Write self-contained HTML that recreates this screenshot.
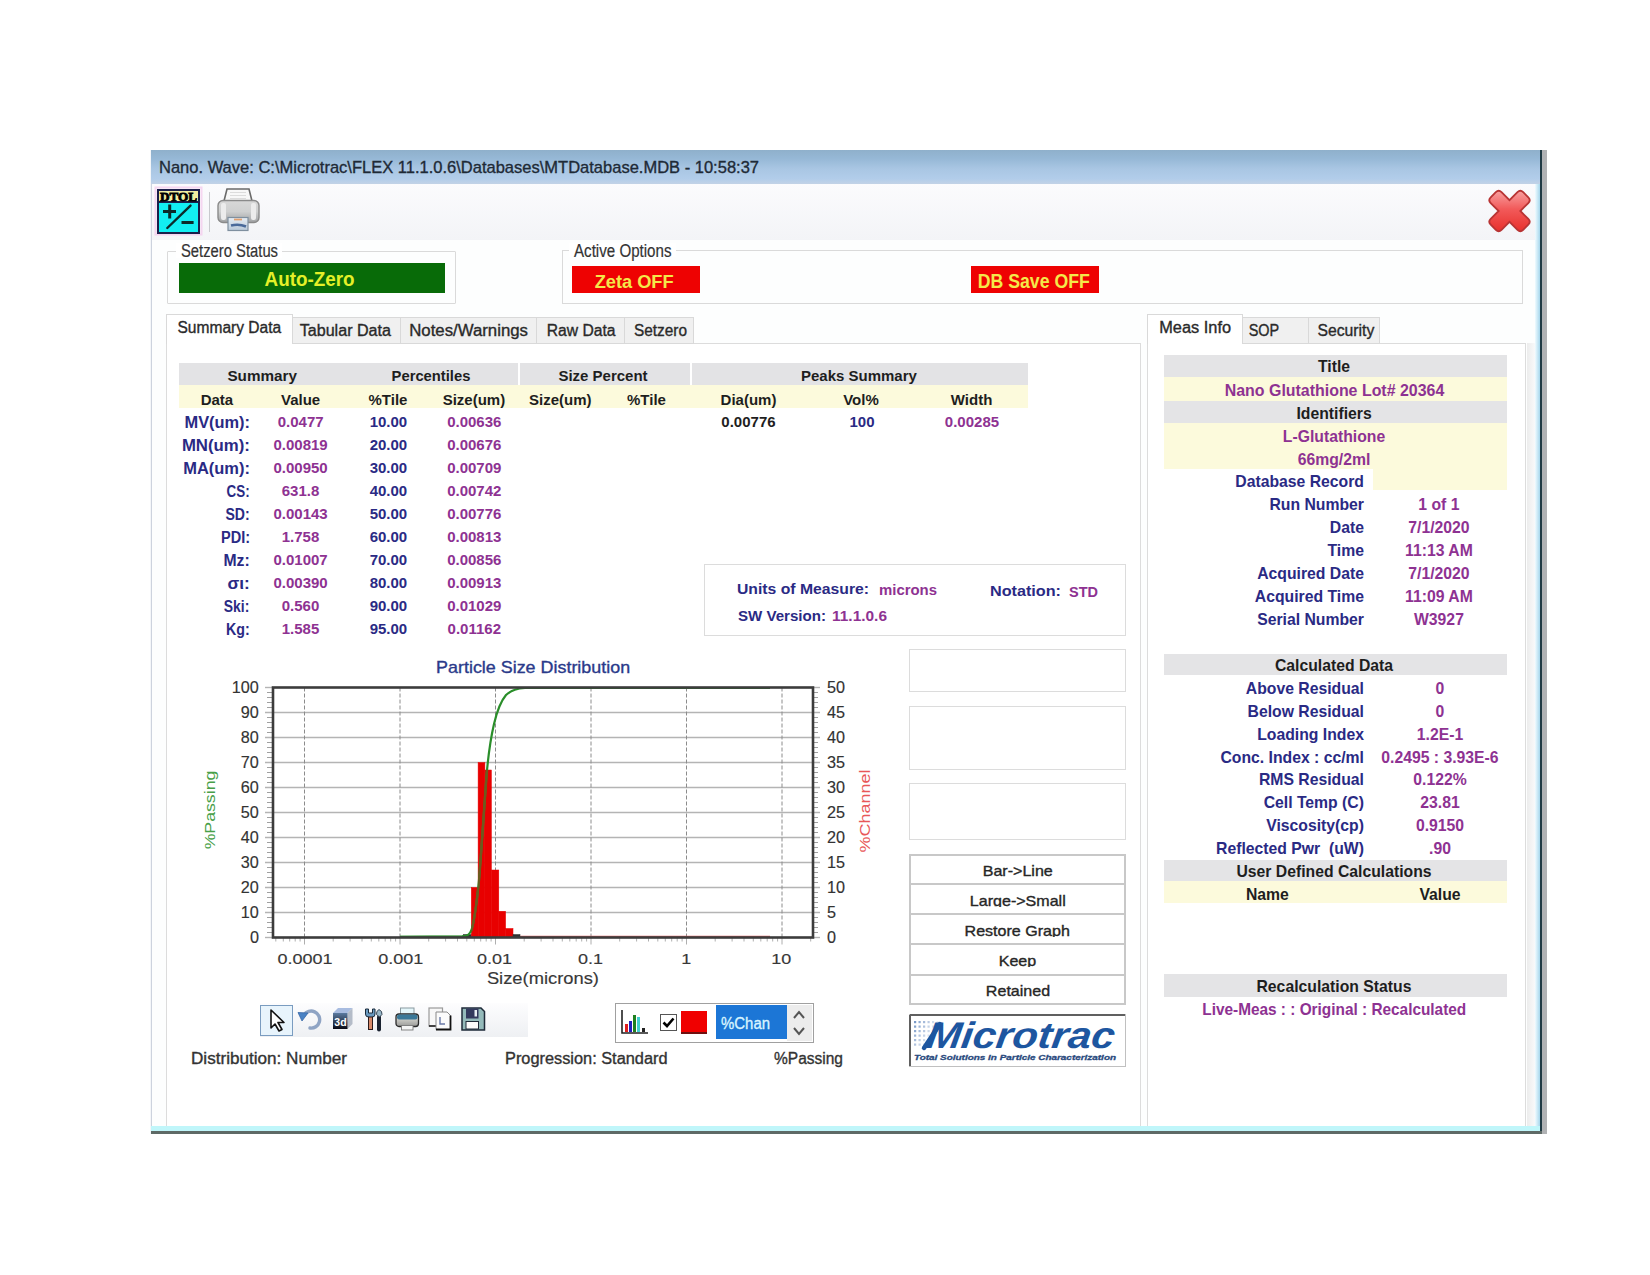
<!DOCTYPE html>
<html><head><meta charset="utf-8">
<style>
*{margin:0;padding:0;box-sizing:border-box}
html,body{width:1650px;height:1275px;background:#fff;overflow:hidden;position:relative;font-family:"Liberation Sans",sans-serif}
.a{position:absolute}
.t{position:absolute;white-space:nowrap}
svg{position:absolute;overflow:visible}
</style></head><body>
<div class="a" style="left:150px;top:150px;width:1390px;height:984px;background:#fdfefe;border-left:1px solid #f4f6f9"></div>
<div class="a" style="left:151px;top:184px;width:1px;height:947px;background:#cdd3de"></div>
<div class="a" style="left:151px;top:150px;width:1389px;height:34px;background:linear-gradient(#8fb0cb 0%,#96b8d6 25%,#a9c6e3 55%,#b2cdea 85%,#c2d2e6 100%)"></div>
<div class="t" style="left:159.0px;top:157.0px;width:621.9px;text-align:left;font-size:17px;line-height:22px;color:#1e2a36;-webkit-text-stroke:0.35px;transform:scaleX(0.9710);transform-origin:0 50%;">Nano. Wave: C:\Microtrac\FLEX 11.1.0.6\Databases\MTDatabase.MDB - 10:58:37</div>
<div class="a" style="left:152px;top:184px;width:1386px;height:56px;background:linear-gradient(#fbfbfd,#f3f4f7)"></div>
<div class="a" style="left:1527px;top:343px;width:9px;height:783px;background:linear-gradient(90deg,#ececec,#fafbfc)"></div>
<div class="a" style="left:1535px;top:184px;width:5px;height:947px;background:linear-gradient(90deg,#f0fbff,#a6d6ec)"></div>
<div class="a" style="left:1540px;top:150px;width:2px;height:984px;background:#1f3a44"></div>
<div class="a" style="left:1542px;top:150px;width:5px;height:984px;background:#b0b2b4"></div>
<div class="a" style="left:151px;top:1126px;width:1389px;height:5px;background:#c0f6fa"></div>
<div class="a" style="left:151px;top:1131px;width:1391px;height:3px;background:#5e6a66"></div>
<svg style="left:155px;top:187px" width="47" height="48" viewBox="-2 -2 47 48">
<rect x="-1.5" y="-1.5" width="46" height="47" fill="none" stroke="#f4c8ec" stroke-width="2" opacity="0.7"/>
<rect x="1" y="1" width="41" height="43" fill="#12eef2" stroke="#1a1f4a" stroke-width="2"/>
<rect x="1" y="1" width="41" height="12" fill="#f2eea0" stroke="#1a1f4a" stroke-width="2"/>
<text x="21.5" y="11.6" text-anchor="middle" font-family="Liberation Serif" font-weight="bold" font-size="13.5" fill="#000" textLength="37" lengthAdjust="spacingAndGlyphs" stroke="#000" stroke-width="0.9">DTOL</text>
<path d="M6 22.5 H19 M12.7 15.4 V29.5" stroke="#0c2a2a" stroke-width="3"/>
<path d="M10.3 39 L33.5 16.6" stroke="#0c2a2a" stroke-width="2.4" stroke-linecap="round"/>
<path d="M24.5 33.5 H36.6" stroke="#0c2a2a" stroke-width="3"/>
</svg>
<div class="a" style="left:209px;top:192px;width:1px;height:40px;background:#c8cace"></div>
<svg style="left:217px;top:188px" width="44" height="44" viewBox="0 0 44 44">
<defs><linearGradient id="pg" x1="0" y1="0" x2="0" y2="1"><stop offset="0" stop-color="#d8d8d8"/><stop offset="0.5" stop-color="#cfd0d0"/><stop offset="1" stop-color="#a0a2a4"/></linearGradient>
<linearGradient id="tg" x1="0" y1="0" x2="0" y2="1"><stop offset="0" stop-color="#e8eef4"/><stop offset="1" stop-color="#b8c8d8"/></linearGradient></defs>
<path d="M7 13 L10 1 H32 L35 13 Z" fill="#f8f8f8" stroke="#6a6a6a" stroke-width="1.6"/>
<path d="M13 4.5 H29 M13 7.5 H29 M13 10.5 H29" stroke="#d4d4d4" stroke-width="0.8"/>
<rect x="1" y="12.5" width="41" height="22" rx="5" fill="url(#pg)" stroke="#8a8a8a" stroke-width="1.4"/>
<rect x="4" y="15" width="5" height="17" rx="2" fill="#ececec"/><rect x="34" y="15" width="5" height="17" rx="2" fill="#ececec"/>
<rect x="11" y="29.5" width="20" height="13" fill="url(#tg)" stroke="#7f8f9f" stroke-width="1.2"/>
<path d="M14 37.5 Q22 35.5 29 38.5" stroke="#4a6a9a" stroke-width="2.6" fill="none"/>
<path d="M17 31.5 L25 31.5" stroke="#e0a070" stroke-width="1.8"/>
</svg>
<svg style="left:1480px;top:183px" width="60" height="58" viewBox="0 0 60 58">
<defs><linearGradient id="xg" x1="0" y1="0" x2="0" y2="1"><stop offset="0" stop-color="#f8a0a0"/><stop offset="0.45" stop-color="#f25a5a"/><stop offset="1" stop-color="#e8302c"/></linearGradient></defs>
<g transform="translate(29.5,28) scale(1.14)" fill="url(#xg)" stroke="#b83434" stroke-width="1.6">
<path d="M-16.5,-12 L-12,-16.5 Q-9.5,-19 -7,-16.5 L0,-9.5 L7,-16.5 Q9.5,-19 12,-16.5 L16.5,-12 Q19,-9.5 16.5,-7 L9.5,0 L16.5,7 Q19,9.5 16.5,12 L12,16.5 Q9.5,19 7,16.5 L0,9.5 L-7,16.5 Q-9.5,19 -12,16.5 L-16.5,12 Q-19,9.5 -16.5,7 L-9.5,0 L-16.5,-7 Q-19,-9.5 -16.5,-12 Z"/>
</g></svg>
<div class="a" style="left:167px;top:251px;width:289px;height:53px;border:1px solid #dadada;border-radius:1px"></div>
<div class="a" style="left:176px;top:243px;width:106px;height:15px;background:#fff"></div>
<div class="t" style="left:180.5px;top:239.7px;width:122.1px;text-align:left;font-size:18px;line-height:23px;color:#333;-webkit-text-stroke:0.2px;transform:scaleX(0.8216);transform-origin:0 50%;">Setzero Status</div>
<div class="a" style="left:179px;top:263px;width:266px;height:30px;background:#086b08"></div>
<div class="t" style="left:261.0px;top:266.5px;width:97.2px;text-align:center;font-size:19.5px;line-height:25px;color:#e4f028;font-weight:bold;transform:scaleX(0.9662);transform-origin:50% 50%;">Auto-Zero</div>
<div class="a" style="left:562px;top:250px;width:961px;height:54px;border:1px solid #dadada"></div>
<div class="a" style="left:569px;top:243px;width:107px;height:14px;background:#fff"></div>
<div class="t" style="left:573.7px;top:239.7px;width:120.1px;text-align:left;font-size:18px;line-height:23px;color:#333;-webkit-text-stroke:0.2px;transform:scaleX(0.8401);transform-origin:0 50%;">Active Options</div>
<div class="a" style="left:572px;top:266px;width:128px;height:27px;background:#ee0202"></div>
<div class="t" style="left:591.2px;top:269.3px;width:86.3px;text-align:center;font-size:19px;line-height:25px;color:#f4e84a;font-weight:bold;transform:scaleX(0.9595);transform-origin:50% 50%;">Zeta OFF</div>
<div class="a" style="left:971px;top:266px;width:128px;height:27px;background:#ee0202"></div>
<div class="t" style="left:969.9px;top:269.0px;width:127.5px;text-align:center;font-size:19.5px;line-height:25px;color:#f4e84a;font-weight:bold;transform:scaleX(0.9066);transform-origin:50% 50%;">DB Save OFF</div>
<div class="a" style="left:166px;top:343px;width:975px;height:783px;border:1px solid #dcdcdc;border-bottom:none;background:#fff"></div>
<div class="a" style="left:292px;top:317px;width:109px;height:27px;background:#f0f0f0;border:1px solid #d9d9d9"></div>
<div class="t" style="left:297.8px;top:320.0px;width:94.7px;text-align:center;font-size:16px;line-height:21px;color:#2a2a2a;-webkit-text-stroke:0.35px;transform:scaleX(1.0064);transform-origin:50% 50%;">Tabular Data</div>
<div class="a" style="left:400px;top:317px;width:137px;height:27px;background:#f0f0f0;border:1px solid #d9d9d9"></div>
<div class="t" style="left:410.0px;top:320.0px;width:117.2px;text-align:center;font-size:16px;line-height:21px;color:#2a2a2a;-webkit-text-stroke:0.35px;transform:scaleX(1.0492);transform-origin:50% 50%;">Notes/Warnings</div>
<div class="a" style="left:536px;top:317px;width:89px;height:27px;background:#f0f0f0;border:1px solid #d9d9d9"></div>
<div class="t" style="left:544.3px;top:320.0px;width:74.3px;text-align:center;font-size:16px;line-height:21px;color:#2a2a2a;-webkit-text-stroke:0.35px;transform:scaleX(0.9793);transform-origin:50% 50%;">Raw Data</div>
<div class="a" style="left:624px;top:317px;width:70px;height:27px;background:#f0f0f0;border:1px solid #d9d9d9"></div>
<div class="t" style="left:631.1px;top:320.0px;width:59.1px;text-align:center;font-size:16px;line-height:21px;color:#2a2a2a;-webkit-text-stroke:0.35px;transform:scaleX(0.9611);transform-origin:50% 50%;">Setzero</div>
<div class="a" style="left:166px;top:314px;width:127px;height:30px;background:#fff;border:1px solid #d9d9d9;border-bottom:none"></div>
<div class="t" style="left:174.1px;top:317.0px;width:110.7px;text-align:center;font-size:16px;line-height:21px;color:#2a2a2a;-webkit-text-stroke:0.35px;transform:scaleX(0.9719);transform-origin:50% 50%;">Summary Data</div>
<div class="a" style="left:1147px;top:343px;width:379px;height:783px;border:1px solid #dcdcdc;border-bottom:none;background:#fff"></div>
<div class="a" style="left:1242px;top:317px;width:67px;height:27px;background:#f0f0f0;border:1px solid #d9d9d9"></div>
<div class="t" style="left:1244.8px;top:319.5px;width:37.8px;text-align:center;font-size:16px;line-height:21px;color:#2a2a2a;-webkit-text-stroke:0.35px;transform:scaleX(0.9026);transform-origin:50% 50%;">SOP</div>
<div class="a" style="left:1308px;top:317px;width:72px;height:27px;background:#f0f0f0;border:1px solid #d9d9d9"></div>
<div class="t" style="left:1315.2px;top:319.5px;width:61.8px;text-align:center;font-size:16px;line-height:21px;color:#2a2a2a;-webkit-text-stroke:0.35px;transform:scaleX(0.9827);transform-origin:50% 50%;">Security</div>
<div class="a" style="left:1147px;top:314px;width:96px;height:30px;background:#fff;border:1px solid #d9d9d9;border-bottom:none"></div>
<div class="t" style="left:1157.5px;top:316.5px;width:74.3px;text-align:center;font-size:16px;line-height:21px;color:#2a2a2a;-webkit-text-stroke:0.35px;transform:scaleX(1.0219);transform-origin:50% 50%;">Meas Info</div>
<div class="a" style="left:179px;top:363px;width:849px;height:22px;background:#e3e3e5"></div>
<div class="a" style="left:518px;top:363px;width:2px;height:22px;background:#fff"></div>
<div class="a" style="left:690px;top:363px;width:2px;height:22px;background:#fff"></div>
<div class="a" style="left:179px;top:385px;width:849px;height:23px;background:#fcfadc"></div>
<div class="t" style="left:225.8px;top:366.0px;width:72.4px;text-align:center;font-size:15px;line-height:20px;color:#1e1e1e;font-weight:bold;transform:scaleX(1.0181);transform-origin:50% 50%;">Summary</div>
<div class="t" style="left:388.9px;top:366.0px;width:84.0px;text-align:center;font-size:15px;line-height:20px;color:#1e1e1e;font-weight:bold;transform:scaleX(0.9844);transform-origin:50% 50%;">Percentiles</div>
<div class="t" style="left:556.4px;top:366.0px;width:93.2px;text-align:center;font-size:15px;line-height:20px;color:#1e1e1e;font-weight:bold;">Size Percent</div>
<div class="t" style="left:799.0px;top:366.0px;width:119.9px;text-align:center;font-size:15px;line-height:20px;color:#1e1e1e;font-weight:bold;">Peaks Summary</div>
<div class="t" style="left:198.7px;top:389.5px;width:36.5px;text-align:center;font-size:15px;line-height:20px;color:#1e1e1e;font-weight:bold;">Data</div>
<div class="t" style="left:279.0px;top:389.5px;width:43.2px;text-align:center;font-size:15px;line-height:20px;color:#1e1e1e;font-weight:bold;">Value</div>
<div class="t" style="left:366.5px;top:389.5px;width:42.9px;text-align:center;font-size:15px;line-height:20px;color:#1e1e1e;font-weight:bold;">%Tile</div>
<div class="t" style="left:440.7px;top:389.5px;width:66.5px;text-align:center;font-size:15px;line-height:20px;color:#1e1e1e;font-weight:bold;">Size(um)</div>
<div class="t" style="left:527.1px;top:389.5px;width:66.5px;text-align:center;font-size:15px;line-height:20px;color:#1e1e1e;font-weight:bold;">Size(um)</div>
<div class="t" style="left:625.0px;top:389.5px;width:42.9px;text-align:center;font-size:15px;line-height:20px;color:#1e1e1e;font-weight:bold;">%Tile</div>
<div class="t" style="left:718.6px;top:389.5px;width:59.8px;text-align:center;font-size:15px;line-height:20px;color:#1e1e1e;font-weight:bold;">Dia(um)</div>
<div class="t" style="left:841.2px;top:389.5px;width:39.6px;text-align:center;font-size:15px;line-height:20px;color:#1e1e1e;font-weight:bold;">Vol%</div>
<div class="t" style="left:948.8px;top:389.5px;width:45.5px;text-align:center;font-size:15px;line-height:20px;color:#1e1e1e;font-weight:bold;">Width</div>
<div class="t" style="left:181.7px;top:411.7px;width:68.0px;text-align:right;font-size:16px;line-height:21px;color:#2a2a84;font-weight:bold;transform:scaleX(1.0236);transform-origin:100% 50%;">MV(um):</div>
<div class="t" style="left:275.7px;top:412.2px;width:49.9px;text-align:center;font-size:15px;line-height:20px;color:#8e3292;font-weight:bold;">0.0477</div>
<div class="t" style="left:367.7px;top:412.2px;width:41.5px;text-align:center;font-size:15px;line-height:20px;color:#2a2a84;font-weight:bold;">10.00</div>
<div class="t" style="left:445.2px;top:412.2px;width:58.2px;text-align:center;font-size:15px;line-height:20px;color:#8e3292;font-weight:bold;">0.00636</div>
<div class="t" style="left:180.8px;top:434.7px;width:68.9px;text-align:right;font-size:16px;line-height:21px;color:#2a2a84;font-weight:bold;transform:scaleX(1.0483);transform-origin:100% 50%;">MN(um):</div>
<div class="t" style="left:271.5px;top:435.2px;width:58.2px;text-align:center;font-size:15px;line-height:20px;color:#8e3292;font-weight:bold;">0.00819</div>
<div class="t" style="left:367.7px;top:435.2px;width:41.5px;text-align:center;font-size:15px;line-height:20px;color:#2a2a84;font-weight:bold;">20.00</div>
<div class="t" style="left:445.2px;top:435.2px;width:58.2px;text-align:center;font-size:15px;line-height:20px;color:#8e3292;font-weight:bold;">0.00676</div>
<div class="t" style="left:180.8px;top:457.7px;width:68.9px;text-align:right;font-size:16px;line-height:21px;color:#2a2a84;font-weight:bold;transform:scaleX(1.0282);transform-origin:100% 50%;">MA(um):</div>
<div class="t" style="left:271.5px;top:458.2px;width:58.2px;text-align:center;font-size:15px;line-height:20px;color:#8e3292;font-weight:bold;">0.00950</div>
<div class="t" style="left:367.7px;top:458.2px;width:41.5px;text-align:center;font-size:15px;line-height:20px;color:#2a2a84;font-weight:bold;">30.00</div>
<div class="t" style="left:445.2px;top:458.2px;width:58.2px;text-align:center;font-size:15px;line-height:20px;color:#8e3292;font-weight:bold;">0.00709</div>
<div class="t" style="left:218.1px;top:480.7px;width:31.6px;text-align:right;font-size:16px;line-height:21px;color:#2a2a84;font-weight:bold;transform:scaleX(0.8347);transform-origin:100% 50%;">CS:</div>
<div class="t" style="left:279.8px;top:481.2px;width:41.5px;text-align:center;font-size:15px;line-height:20px;color:#8e3292;font-weight:bold;">631.8</div>
<div class="t" style="left:367.7px;top:481.2px;width:41.5px;text-align:center;font-size:15px;line-height:20px;color:#2a2a84;font-weight:bold;">40.00</div>
<div class="t" style="left:445.2px;top:481.2px;width:58.2px;text-align:center;font-size:15px;line-height:20px;color:#8e3292;font-weight:bold;">0.00742</div>
<div class="t" style="left:218.1px;top:503.7px;width:31.6px;text-align:right;font-size:16px;line-height:21px;color:#2a2a84;font-weight:bold;transform:scaleX(0.8782);transform-origin:100% 50%;">SD:</div>
<div class="t" style="left:271.5px;top:504.2px;width:58.2px;text-align:center;font-size:15px;line-height:20px;color:#8e3292;font-weight:bold;">0.00143</div>
<div class="t" style="left:367.7px;top:504.2px;width:41.5px;text-align:center;font-size:15px;line-height:20px;color:#2a2a84;font-weight:bold;">50.00</div>
<div class="t" style="left:445.2px;top:504.2px;width:58.2px;text-align:center;font-size:15px;line-height:20px;color:#8e3292;font-weight:bold;">0.00776</div>
<div class="t" style="left:213.7px;top:526.7px;width:36.0px;text-align:right;font-size:16px;line-height:21px;color:#2a2a84;font-weight:bold;transform:scaleX(0.9062);transform-origin:100% 50%;">PDI:</div>
<div class="t" style="left:279.8px;top:527.2px;width:41.5px;text-align:center;font-size:15px;line-height:20px;color:#8e3292;font-weight:bold;">1.758</div>
<div class="t" style="left:367.7px;top:527.2px;width:41.5px;text-align:center;font-size:15px;line-height:20px;color:#2a2a84;font-weight:bold;">60.00</div>
<div class="t" style="left:445.2px;top:527.2px;width:58.2px;text-align:center;font-size:15px;line-height:20px;color:#8e3292;font-weight:bold;">0.00813</div>
<div class="t" style="left:219.0px;top:549.7px;width:30.7px;text-align:right;font-size:16px;line-height:21px;color:#2a2a84;font-weight:bold;transform:scaleX(0.9828);transform-origin:100% 50%;">Mz:</div>
<div class="t" style="left:271.5px;top:550.2px;width:58.2px;text-align:center;font-size:15px;line-height:20px;color:#8e3292;font-weight:bold;">0.01007</div>
<div class="t" style="left:367.7px;top:550.2px;width:41.5px;text-align:center;font-size:15px;line-height:20px;color:#2a2a84;font-weight:bold;">70.00</div>
<div class="t" style="left:445.2px;top:550.2px;width:58.2px;text-align:center;font-size:15px;line-height:20px;color:#8e3292;font-weight:bold;">0.00856</div>
<div class="t" style="left:225.0px;top:572.7px;width:24.7px;text-align:right;font-size:16px;line-height:21px;color:#2a2a84;font-weight:bold;transform:scaleX(1.0763);transform-origin:100% 50%;">σι:</div>
<div class="t" style="left:271.5px;top:573.2px;width:58.2px;text-align:center;font-size:15px;line-height:20px;color:#8e3292;font-weight:bold;">0.00390</div>
<div class="t" style="left:367.7px;top:573.2px;width:41.5px;text-align:center;font-size:15px;line-height:20px;color:#2a2a84;font-weight:bold;">80.00</div>
<div class="t" style="left:445.2px;top:573.2px;width:58.2px;text-align:center;font-size:15px;line-height:20px;color:#8e3292;font-weight:bold;">0.00913</div>
<div class="t" style="left:216.4px;top:595.7px;width:33.3px;text-align:right;font-size:16px;line-height:21px;color:#2a2a84;font-weight:bold;transform:scaleX(0.8690);transform-origin:100% 50%;">Ski:</div>
<div class="t" style="left:279.8px;top:596.2px;width:41.5px;text-align:center;font-size:15px;line-height:20px;color:#8e3292;font-weight:bold;">0.560</div>
<div class="t" style="left:367.7px;top:596.2px;width:41.5px;text-align:center;font-size:15px;line-height:20px;color:#2a2a84;font-weight:bold;">90.00</div>
<div class="t" style="left:445.2px;top:596.2px;width:58.2px;text-align:center;font-size:15px;line-height:20px;color:#8e3292;font-weight:bold;">0.01029</div>
<div class="t" style="left:219.0px;top:618.7px;width:30.7px;text-align:right;font-size:16px;line-height:21px;color:#2a2a84;font-weight:bold;transform:scaleX(0.8891);transform-origin:100% 50%;">Kg:</div>
<div class="t" style="left:279.8px;top:619.2px;width:41.5px;text-align:center;font-size:15px;line-height:20px;color:#8e3292;font-weight:bold;">1.585</div>
<div class="t" style="left:367.7px;top:619.2px;width:41.5px;text-align:center;font-size:15px;line-height:20px;color:#2a2a84;font-weight:bold;">95.00</div>
<div class="t" style="left:445.6px;top:619.2px;width:57.4px;text-align:center;font-size:15px;line-height:20px;color:#8e3292;font-weight:bold;">0.01162</div>
<div class="t" style="left:719.4px;top:412.2px;width:58.2px;text-align:center;font-size:15px;line-height:20px;color:#1e1e1e;font-weight:bold;">0.00776</div>
<div class="t" style="left:847.5px;top:412.2px;width:29.0px;text-align:center;font-size:15px;line-height:20px;color:#2a2a84;font-weight:bold;">100</div>
<div class="t" style="left:942.9px;top:412.2px;width:58.2px;text-align:center;font-size:15px;line-height:20px;color:#8e3292;font-weight:bold;">0.00285</div>
<div class="a" style="left:704px;top:564px;width:422px;height:72px;border:1px solid #dcdcdc"></div>
<div class="t" style="left:737.0px;top:578.6px;width:129.9px;text-align:left;font-size:15px;line-height:20px;color:#2a2a84;font-weight:bold;transform:scaleX(1.0488);transform-origin:0 50%;">Units of Measure:</div>
<div class="t" style="left:878.5px;top:580.0px;width:62.4px;text-align:left;font-size:15px;line-height:20px;color:#8e3292;font-weight:bold;transform:scaleX(0.9940);transform-origin:0 50%;">microns</div>
<div class="t" style="left:990.0px;top:581.0px;width:69.8px;text-align:left;font-size:15px;line-height:20px;color:#2a2a84;font-weight:bold;transform:scaleX(1.0787);transform-origin:0 50%;">Notation:</div>
<div class="t" style="left:1068.6px;top:582.0px;width:34.0px;text-align:left;font-size:15px;line-height:20px;color:#8e3292;font-weight:bold;transform:scaleX(0.9666);transform-origin:0 50%;">STD</div>
<div class="t" style="left:738.0px;top:605.7px;width:91.5px;text-align:left;font-size:15px;line-height:20px;color:#2a2a84;font-weight:bold;transform:scaleX(1.0055);transform-origin:0 50%;">SW Version:</div>
<div class="t" style="left:832.0px;top:606.0px;width:57.4px;text-align:left;font-size:15px;line-height:20px;color:#8e3292;font-weight:bold;transform:scaleX(1.0302);transform-origin:0 50%;">11.1.0.6</div>
<div class="t" style="left:438.5px;top:656.5px;width:188.2px;text-align:center;font-size:17px;line-height:22px;color:#2a3a8a;-webkit-text-stroke:0.35px;transform:scaleX(1.0530);transform-origin:50% 50%;">Particle Size Distribution</div>
<svg style="left:0;top:0" width="1650" height="1275">
<line x1="265" y1="912.5" x2="820" y2="912.5" stroke="#b4b4b4" stroke-width="1.4"/>
<line x1="265" y1="887.5" x2="820" y2="887.5" stroke="#b4b4b4" stroke-width="1.4"/>
<line x1="265" y1="862.5" x2="820" y2="862.5" stroke="#b4b4b4" stroke-width="1.4"/>
<line x1="265" y1="837.5" x2="820" y2="837.5" stroke="#b4b4b4" stroke-width="1.4"/>
<line x1="265" y1="812.5" x2="820" y2="812.5" stroke="#b4b4b4" stroke-width="1.4"/>
<line x1="265" y1="787.5" x2="820" y2="787.5" stroke="#b4b4b4" stroke-width="1.4"/>
<line x1="265" y1="762.5" x2="820" y2="762.5" stroke="#b4b4b4" stroke-width="1.4"/>
<line x1="265" y1="737.5" x2="820" y2="737.5" stroke="#b4b4b4" stroke-width="1.4"/>
<line x1="265" y1="712.5" x2="820" y2="712.5" stroke="#b4b4b4" stroke-width="1.4"/>
<line x1="265" y1="937.5" x2="273" y2="937.5" stroke="#b4b4b4" stroke-width="1.4"/>
<line x1="812" y1="937.5" x2="820" y2="937.5" stroke="#b4b4b4" stroke-width="1.4"/>
<line x1="265" y1="687.5" x2="273" y2="687.5" stroke="#b4b4b4" stroke-width="1.4"/>
<line x1="812" y1="687.5" x2="820" y2="687.5" stroke="#b4b4b4" stroke-width="1.4"/>
<line x1="304.5" y1="687.5" x2="304.5" y2="937.5" stroke="#8c8c8c" stroke-width="1" stroke-dasharray="4,2"/>
<line x1="400" y1="687.5" x2="400" y2="937.5" stroke="#8c8c8c" stroke-width="1" stroke-dasharray="4,2"/>
<line x1="495.5" y1="687.5" x2="495.5" y2="937.5" stroke="#8c8c8c" stroke-width="1" stroke-dasharray="4,2"/>
<line x1="591" y1="687.5" x2="591" y2="937.5" stroke="#8c8c8c" stroke-width="1" stroke-dasharray="4,2"/>
<line x1="686.5" y1="687.5" x2="686.5" y2="937.5" stroke="#8c8c8c" stroke-width="1" stroke-dasharray="4,2"/>
<line x1="782" y1="687.5" x2="782" y2="937.5" stroke="#8c8c8c" stroke-width="1" stroke-dasharray="4,2"/>
<line x1="267" y1="932.5" x2="273" y2="932.5" stroke="#a0a0a0" stroke-width="1"/>
<line x1="812" y1="932.5" x2="818" y2="932.5" stroke="#a0a0a0" stroke-width="1"/>
<line x1="267" y1="927.5" x2="273" y2="927.5" stroke="#a0a0a0" stroke-width="1"/>
<line x1="812" y1="927.5" x2="818" y2="927.5" stroke="#a0a0a0" stroke-width="1"/>
<line x1="267" y1="922.5" x2="273" y2="922.5" stroke="#a0a0a0" stroke-width="1"/>
<line x1="812" y1="922.5" x2="818" y2="922.5" stroke="#a0a0a0" stroke-width="1"/>
<line x1="267" y1="917.5" x2="273" y2="917.5" stroke="#a0a0a0" stroke-width="1"/>
<line x1="812" y1="917.5" x2="818" y2="917.5" stroke="#a0a0a0" stroke-width="1"/>
<line x1="267" y1="907.5" x2="273" y2="907.5" stroke="#a0a0a0" stroke-width="1"/>
<line x1="812" y1="907.5" x2="818" y2="907.5" stroke="#a0a0a0" stroke-width="1"/>
<line x1="267" y1="902.5" x2="273" y2="902.5" stroke="#a0a0a0" stroke-width="1"/>
<line x1="812" y1="902.5" x2="818" y2="902.5" stroke="#a0a0a0" stroke-width="1"/>
<line x1="267" y1="897.5" x2="273" y2="897.5" stroke="#a0a0a0" stroke-width="1"/>
<line x1="812" y1="897.5" x2="818" y2="897.5" stroke="#a0a0a0" stroke-width="1"/>
<line x1="267" y1="892.5" x2="273" y2="892.5" stroke="#a0a0a0" stroke-width="1"/>
<line x1="812" y1="892.5" x2="818" y2="892.5" stroke="#a0a0a0" stroke-width="1"/>
<line x1="267" y1="882.5" x2="273" y2="882.5" stroke="#a0a0a0" stroke-width="1"/>
<line x1="812" y1="882.5" x2="818" y2="882.5" stroke="#a0a0a0" stroke-width="1"/>
<line x1="267" y1="877.5" x2="273" y2="877.5" stroke="#a0a0a0" stroke-width="1"/>
<line x1="812" y1="877.5" x2="818" y2="877.5" stroke="#a0a0a0" stroke-width="1"/>
<line x1="267" y1="872.5" x2="273" y2="872.5" stroke="#a0a0a0" stroke-width="1"/>
<line x1="812" y1="872.5" x2="818" y2="872.5" stroke="#a0a0a0" stroke-width="1"/>
<line x1="267" y1="867.5" x2="273" y2="867.5" stroke="#a0a0a0" stroke-width="1"/>
<line x1="812" y1="867.5" x2="818" y2="867.5" stroke="#a0a0a0" stroke-width="1"/>
<line x1="267" y1="857.5" x2="273" y2="857.5" stroke="#a0a0a0" stroke-width="1"/>
<line x1="812" y1="857.5" x2="818" y2="857.5" stroke="#a0a0a0" stroke-width="1"/>
<line x1="267" y1="852.5" x2="273" y2="852.5" stroke="#a0a0a0" stroke-width="1"/>
<line x1="812" y1="852.5" x2="818" y2="852.5" stroke="#a0a0a0" stroke-width="1"/>
<line x1="267" y1="847.5" x2="273" y2="847.5" stroke="#a0a0a0" stroke-width="1"/>
<line x1="812" y1="847.5" x2="818" y2="847.5" stroke="#a0a0a0" stroke-width="1"/>
<line x1="267" y1="842.5" x2="273" y2="842.5" stroke="#a0a0a0" stroke-width="1"/>
<line x1="812" y1="842.5" x2="818" y2="842.5" stroke="#a0a0a0" stroke-width="1"/>
<line x1="267" y1="832.5" x2="273" y2="832.5" stroke="#a0a0a0" stroke-width="1"/>
<line x1="812" y1="832.5" x2="818" y2="832.5" stroke="#a0a0a0" stroke-width="1"/>
<line x1="267" y1="827.5" x2="273" y2="827.5" stroke="#a0a0a0" stroke-width="1"/>
<line x1="812" y1="827.5" x2="818" y2="827.5" stroke="#a0a0a0" stroke-width="1"/>
<line x1="267" y1="822.5" x2="273" y2="822.5" stroke="#a0a0a0" stroke-width="1"/>
<line x1="812" y1="822.5" x2="818" y2="822.5" stroke="#a0a0a0" stroke-width="1"/>
<line x1="267" y1="817.5" x2="273" y2="817.5" stroke="#a0a0a0" stroke-width="1"/>
<line x1="812" y1="817.5" x2="818" y2="817.5" stroke="#a0a0a0" stroke-width="1"/>
<line x1="267" y1="807.5" x2="273" y2="807.5" stroke="#a0a0a0" stroke-width="1"/>
<line x1="812" y1="807.5" x2="818" y2="807.5" stroke="#a0a0a0" stroke-width="1"/>
<line x1="267" y1="802.5" x2="273" y2="802.5" stroke="#a0a0a0" stroke-width="1"/>
<line x1="812" y1="802.5" x2="818" y2="802.5" stroke="#a0a0a0" stroke-width="1"/>
<line x1="267" y1="797.5" x2="273" y2="797.5" stroke="#a0a0a0" stroke-width="1"/>
<line x1="812" y1="797.5" x2="818" y2="797.5" stroke="#a0a0a0" stroke-width="1"/>
<line x1="267" y1="792.5" x2="273" y2="792.5" stroke="#a0a0a0" stroke-width="1"/>
<line x1="812" y1="792.5" x2="818" y2="792.5" stroke="#a0a0a0" stroke-width="1"/>
<line x1="267" y1="782.5" x2="273" y2="782.5" stroke="#a0a0a0" stroke-width="1"/>
<line x1="812" y1="782.5" x2="818" y2="782.5" stroke="#a0a0a0" stroke-width="1"/>
<line x1="267" y1="777.5" x2="273" y2="777.5" stroke="#a0a0a0" stroke-width="1"/>
<line x1="812" y1="777.5" x2="818" y2="777.5" stroke="#a0a0a0" stroke-width="1"/>
<line x1="267" y1="772.5" x2="273" y2="772.5" stroke="#a0a0a0" stroke-width="1"/>
<line x1="812" y1="772.5" x2="818" y2="772.5" stroke="#a0a0a0" stroke-width="1"/>
<line x1="267" y1="767.5" x2="273" y2="767.5" stroke="#a0a0a0" stroke-width="1"/>
<line x1="812" y1="767.5" x2="818" y2="767.5" stroke="#a0a0a0" stroke-width="1"/>
<line x1="267" y1="757.5" x2="273" y2="757.5" stroke="#a0a0a0" stroke-width="1"/>
<line x1="812" y1="757.5" x2="818" y2="757.5" stroke="#a0a0a0" stroke-width="1"/>
<line x1="267" y1="752.5" x2="273" y2="752.5" stroke="#a0a0a0" stroke-width="1"/>
<line x1="812" y1="752.5" x2="818" y2="752.5" stroke="#a0a0a0" stroke-width="1"/>
<line x1="267" y1="747.5" x2="273" y2="747.5" stroke="#a0a0a0" stroke-width="1"/>
<line x1="812" y1="747.5" x2="818" y2="747.5" stroke="#a0a0a0" stroke-width="1"/>
<line x1="267" y1="742.5" x2="273" y2="742.5" stroke="#a0a0a0" stroke-width="1"/>
<line x1="812" y1="742.5" x2="818" y2="742.5" stroke="#a0a0a0" stroke-width="1"/>
<line x1="267" y1="732.5" x2="273" y2="732.5" stroke="#a0a0a0" stroke-width="1"/>
<line x1="812" y1="732.5" x2="818" y2="732.5" stroke="#a0a0a0" stroke-width="1"/>
<line x1="267" y1="727.5" x2="273" y2="727.5" stroke="#a0a0a0" stroke-width="1"/>
<line x1="812" y1="727.5" x2="818" y2="727.5" stroke="#a0a0a0" stroke-width="1"/>
<line x1="267" y1="722.5" x2="273" y2="722.5" stroke="#a0a0a0" stroke-width="1"/>
<line x1="812" y1="722.5" x2="818" y2="722.5" stroke="#a0a0a0" stroke-width="1"/>
<line x1="267" y1="717.5" x2="273" y2="717.5" stroke="#a0a0a0" stroke-width="1"/>
<line x1="812" y1="717.5" x2="818" y2="717.5" stroke="#a0a0a0" stroke-width="1"/>
<line x1="267" y1="707.5" x2="273" y2="707.5" stroke="#a0a0a0" stroke-width="1"/>
<line x1="812" y1="707.5" x2="818" y2="707.5" stroke="#a0a0a0" stroke-width="1"/>
<line x1="267" y1="702.5" x2="273" y2="702.5" stroke="#a0a0a0" stroke-width="1"/>
<line x1="812" y1="702.5" x2="818" y2="702.5" stroke="#a0a0a0" stroke-width="1"/>
<line x1="267" y1="697.5" x2="273" y2="697.5" stroke="#a0a0a0" stroke-width="1"/>
<line x1="812" y1="697.5" x2="818" y2="697.5" stroke="#a0a0a0" stroke-width="1"/>
<line x1="267" y1="692.5" x2="273" y2="692.5" stroke="#a0a0a0" stroke-width="1"/>
<line x1="812" y1="692.5" x2="818" y2="692.5" stroke="#a0a0a0" stroke-width="1"/>
<line x1="275.8" y1="937.5" x2="275.8" y2="941.5" stroke="#9a9a9a" stroke-width="0.8"/>
<line x1="283.3" y1="937.5" x2="283.3" y2="941.5" stroke="#9a9a9a" stroke-width="0.8"/>
<line x1="289.7" y1="937.5" x2="289.7" y2="941.5" stroke="#9a9a9a" stroke-width="0.8"/>
<line x1="295.2" y1="937.5" x2="295.2" y2="941.5" stroke="#9a9a9a" stroke-width="0.8"/>
<line x1="300.1" y1="937.5" x2="300.1" y2="941.5" stroke="#9a9a9a" stroke-width="0.8"/>
<line x1="304.5" y1="937.5" x2="304.5" y2="944.5" stroke="#9a9a9a" stroke-width="0.8"/>
<line x1="333.2" y1="937.5" x2="333.2" y2="941.5" stroke="#9a9a9a" stroke-width="0.8"/>
<line x1="350.1" y1="937.5" x2="350.1" y2="941.5" stroke="#9a9a9a" stroke-width="0.8"/>
<line x1="362.0" y1="937.5" x2="362.0" y2="941.5" stroke="#9a9a9a" stroke-width="0.8"/>
<line x1="371.3" y1="937.5" x2="371.3" y2="941.5" stroke="#9a9a9a" stroke-width="0.8"/>
<line x1="378.8" y1="937.5" x2="378.8" y2="941.5" stroke="#9a9a9a" stroke-width="0.8"/>
<line x1="385.2" y1="937.5" x2="385.2" y2="941.5" stroke="#9a9a9a" stroke-width="0.8"/>
<line x1="390.7" y1="937.5" x2="390.7" y2="941.5" stroke="#9a9a9a" stroke-width="0.8"/>
<line x1="395.6" y1="937.5" x2="395.6" y2="941.5" stroke="#9a9a9a" stroke-width="0.8"/>
<line x1="400.0" y1="937.5" x2="400.0" y2="944.5" stroke="#9a9a9a" stroke-width="0.8"/>
<line x1="428.7" y1="937.5" x2="428.7" y2="941.5" stroke="#9a9a9a" stroke-width="0.8"/>
<line x1="445.6" y1="937.5" x2="445.6" y2="941.5" stroke="#9a9a9a" stroke-width="0.8"/>
<line x1="457.5" y1="937.5" x2="457.5" y2="941.5" stroke="#9a9a9a" stroke-width="0.8"/>
<line x1="466.8" y1="937.5" x2="466.8" y2="941.5" stroke="#9a9a9a" stroke-width="0.8"/>
<line x1="474.3" y1="937.5" x2="474.3" y2="941.5" stroke="#9a9a9a" stroke-width="0.8"/>
<line x1="480.7" y1="937.5" x2="480.7" y2="941.5" stroke="#9a9a9a" stroke-width="0.8"/>
<line x1="486.2" y1="937.5" x2="486.2" y2="941.5" stroke="#9a9a9a" stroke-width="0.8"/>
<line x1="491.1" y1="937.5" x2="491.1" y2="941.5" stroke="#9a9a9a" stroke-width="0.8"/>
<line x1="495.5" y1="937.5" x2="495.5" y2="944.5" stroke="#9a9a9a" stroke-width="0.8"/>
<line x1="524.2" y1="937.5" x2="524.2" y2="941.5" stroke="#9a9a9a" stroke-width="0.8"/>
<line x1="541.1" y1="937.5" x2="541.1" y2="941.5" stroke="#9a9a9a" stroke-width="0.8"/>
<line x1="553.0" y1="937.5" x2="553.0" y2="941.5" stroke="#9a9a9a" stroke-width="0.8"/>
<line x1="562.3" y1="937.5" x2="562.3" y2="941.5" stroke="#9a9a9a" stroke-width="0.8"/>
<line x1="569.8" y1="937.5" x2="569.8" y2="941.5" stroke="#9a9a9a" stroke-width="0.8"/>
<line x1="576.2" y1="937.5" x2="576.2" y2="941.5" stroke="#9a9a9a" stroke-width="0.8"/>
<line x1="581.7" y1="937.5" x2="581.7" y2="941.5" stroke="#9a9a9a" stroke-width="0.8"/>
<line x1="586.6" y1="937.5" x2="586.6" y2="941.5" stroke="#9a9a9a" stroke-width="0.8"/>
<line x1="591.0" y1="937.5" x2="591.0" y2="944.5" stroke="#9a9a9a" stroke-width="0.8"/>
<line x1="619.7" y1="937.5" x2="619.7" y2="941.5" stroke="#9a9a9a" stroke-width="0.8"/>
<line x1="636.6" y1="937.5" x2="636.6" y2="941.5" stroke="#9a9a9a" stroke-width="0.8"/>
<line x1="648.5" y1="937.5" x2="648.5" y2="941.5" stroke="#9a9a9a" stroke-width="0.8"/>
<line x1="657.8" y1="937.5" x2="657.8" y2="941.5" stroke="#9a9a9a" stroke-width="0.8"/>
<line x1="665.3" y1="937.5" x2="665.3" y2="941.5" stroke="#9a9a9a" stroke-width="0.8"/>
<line x1="671.7" y1="937.5" x2="671.7" y2="941.5" stroke="#9a9a9a" stroke-width="0.8"/>
<line x1="677.2" y1="937.5" x2="677.2" y2="941.5" stroke="#9a9a9a" stroke-width="0.8"/>
<line x1="682.1" y1="937.5" x2="682.1" y2="941.5" stroke="#9a9a9a" stroke-width="0.8"/>
<line x1="686.5" y1="937.5" x2="686.5" y2="944.5" stroke="#9a9a9a" stroke-width="0.8"/>
<line x1="715.2" y1="937.5" x2="715.2" y2="941.5" stroke="#9a9a9a" stroke-width="0.8"/>
<line x1="732.1" y1="937.5" x2="732.1" y2="941.5" stroke="#9a9a9a" stroke-width="0.8"/>
<line x1="744.0" y1="937.5" x2="744.0" y2="941.5" stroke="#9a9a9a" stroke-width="0.8"/>
<line x1="753.3" y1="937.5" x2="753.3" y2="941.5" stroke="#9a9a9a" stroke-width="0.8"/>
<line x1="760.8" y1="937.5" x2="760.8" y2="941.5" stroke="#9a9a9a" stroke-width="0.8"/>
<line x1="767.2" y1="937.5" x2="767.2" y2="941.5" stroke="#9a9a9a" stroke-width="0.8"/>
<line x1="772.7" y1="937.5" x2="772.7" y2="941.5" stroke="#9a9a9a" stroke-width="0.8"/>
<line x1="777.6" y1="937.5" x2="777.6" y2="941.5" stroke="#9a9a9a" stroke-width="0.8"/>
<line x1="782.0" y1="937.5" x2="782.0" y2="944.5" stroke="#9a9a9a" stroke-width="0.8"/>
<line x1="810.7" y1="937.5" x2="810.7" y2="941.5" stroke="#9a9a9a" stroke-width="0.8"/>
<line x1="400" y1="936.5" x2="471" y2="936.5" stroke="#5ab05a" stroke-width="1.5"/>
<line x1="520" y1="936.5" x2="770" y2="936.5" stroke="#e06060" stroke-width="1.5"/>
<rect x="463.7" y="934.5" width="7.600000000000023" height="3.0" fill="#303030" stroke="#303030" stroke-width="0.5"/>
<rect x="471.3" y="887.5" width="6.800000000000011" height="50.0" fill="#e80000" stroke="#e80000" stroke-width="0.5"/>
<rect x="478.1" y="762.5" width="6.7999999999999545" height="175.0" fill="#e80000" stroke="#e80000" stroke-width="0.5"/>
<rect x="484.9" y="770.0" width="6.5" height="167.5" fill="#e80000" stroke="#e80000" stroke-width="0.5"/>
<rect x="491.4" y="870.0" width="7.400000000000034" height="67.5" fill="#e80000" stroke="#e80000" stroke-width="0.5"/>
<rect x="498.8" y="911.25" width="6.800000000000011" height="26.25" fill="#e80000" stroke="#e80000" stroke-width="0.5"/>
<rect x="505.6" y="928.5" width="7.399999999999977" height="9.0" fill="#e80000" stroke="#e80000" stroke-width="0.5"/>
<rect x="513" y="934.5" width="7" height="3.0" fill="#303030" stroke="#303030" stroke-width="0.5"/>
<path d="M400,936.8 L462,936.3 C468,936 470,934 471.5,930 C474,922 476.5,905 479,880 C481.5,850 484,810 486.5,776 C488.5,752 491,737 494,724 C497,711 501,701 506,695 C511,690 517,688.5 525,688 L770,688" fill="none" stroke="#2a8e2a" stroke-width="2.2" stroke-linejoin="round"/>
<clipPath id="barclip"><rect x="471.3" y="887.5" width="6.800000000000011" height="50.0"/><rect x="478.1" y="762.5" width="6.7999999999999545" height="175.0"/><rect x="484.9" y="770.0" width="6.5" height="167.5"/><rect x="491.4" y="870.0" width="7.400000000000034" height="67.5"/><rect x="498.8" y="911.25" width="6.800000000000011" height="26.25"/><rect x="505.6" y="928.5" width="7.399999999999977" height="9.0"/></clipPath>
<path d="M400,936.8 L462,936.3 C468,936 470,934 471.5,930 C474,922 476.5,905 479,880 C481.5,850 484,810 486.5,776 C488.5,752 491,737 494,724 C497,711 501,701 506,695 C511,690 517,688.5 525,688 L770,688" fill="none" stroke="#6e5a1e" stroke-width="2.4" clip-path="url(#barclip)"/>
<rect x="273" y="687.5" width="540" height="250.0" fill="none" stroke="#3c3c3c" stroke-width="2.6"/>
</svg>
<div class="t" style="left:246.1px;top:927.0px;width:12.9px;text-align:right;font-size:16px;line-height:21px;color:#333;-webkit-text-stroke:0.15px;transform:scaleX(1.0114);transform-origin:100% 50%;">0</div>
<div class="t" style="left:826.5px;top:927.0px;width:12.9px;text-align:left;font-size:16px;line-height:21px;color:#333;-webkit-text-stroke:0.15px;transform:scaleX(1.0114);transform-origin:0 50%;">0</div>
<div class="t" style="left:237.2px;top:902.0px;width:21.8px;text-align:right;font-size:16px;line-height:21px;color:#333;-webkit-text-stroke:0.15px;transform:scaleX(1.0114);transform-origin:100% 50%;">10</div>
<div class="t" style="left:826.5px;top:902.0px;width:12.9px;text-align:left;font-size:16px;line-height:21px;color:#333;-webkit-text-stroke:0.15px;transform:scaleX(1.0114);transform-origin:0 50%;">5</div>
<div class="t" style="left:237.2px;top:877.0px;width:21.8px;text-align:right;font-size:16px;line-height:21px;color:#333;-webkit-text-stroke:0.15px;transform:scaleX(1.0114);transform-origin:100% 50%;">20</div>
<div class="t" style="left:826.5px;top:877.0px;width:21.8px;text-align:left;font-size:16px;line-height:21px;color:#333;-webkit-text-stroke:0.15px;transform:scaleX(1.0114);transform-origin:0 50%;">10</div>
<div class="t" style="left:237.2px;top:852.0px;width:21.8px;text-align:right;font-size:16px;line-height:21px;color:#333;-webkit-text-stroke:0.15px;transform:scaleX(1.0114);transform-origin:100% 50%;">30</div>
<div class="t" style="left:826.5px;top:852.0px;width:21.8px;text-align:left;font-size:16px;line-height:21px;color:#333;-webkit-text-stroke:0.15px;transform:scaleX(1.0114);transform-origin:0 50%;">15</div>
<div class="t" style="left:237.2px;top:827.0px;width:21.8px;text-align:right;font-size:16px;line-height:21px;color:#333;-webkit-text-stroke:0.15px;transform:scaleX(1.0114);transform-origin:100% 50%;">40</div>
<div class="t" style="left:826.5px;top:827.0px;width:21.8px;text-align:left;font-size:16px;line-height:21px;color:#333;-webkit-text-stroke:0.15px;transform:scaleX(1.0114);transform-origin:0 50%;">20</div>
<div class="t" style="left:237.2px;top:802.0px;width:21.8px;text-align:right;font-size:16px;line-height:21px;color:#333;-webkit-text-stroke:0.15px;transform:scaleX(1.0114);transform-origin:100% 50%;">50</div>
<div class="t" style="left:826.5px;top:802.0px;width:21.8px;text-align:left;font-size:16px;line-height:21px;color:#333;-webkit-text-stroke:0.15px;transform:scaleX(1.0114);transform-origin:0 50%;">25</div>
<div class="t" style="left:237.2px;top:777.0px;width:21.8px;text-align:right;font-size:16px;line-height:21px;color:#333;-webkit-text-stroke:0.15px;transform:scaleX(1.0114);transform-origin:100% 50%;">60</div>
<div class="t" style="left:826.5px;top:777.0px;width:21.8px;text-align:left;font-size:16px;line-height:21px;color:#333;-webkit-text-stroke:0.15px;transform:scaleX(1.0114);transform-origin:0 50%;">30</div>
<div class="t" style="left:237.2px;top:752.0px;width:21.8px;text-align:right;font-size:16px;line-height:21px;color:#333;-webkit-text-stroke:0.15px;transform:scaleX(1.0114);transform-origin:100% 50%;">70</div>
<div class="t" style="left:826.5px;top:752.0px;width:21.8px;text-align:left;font-size:16px;line-height:21px;color:#333;-webkit-text-stroke:0.15px;transform:scaleX(1.0114);transform-origin:0 50%;">35</div>
<div class="t" style="left:237.2px;top:727.0px;width:21.8px;text-align:right;font-size:16px;line-height:21px;color:#333;-webkit-text-stroke:0.15px;transform:scaleX(1.0114);transform-origin:100% 50%;">80</div>
<div class="t" style="left:826.5px;top:727.0px;width:21.8px;text-align:left;font-size:16px;line-height:21px;color:#333;-webkit-text-stroke:0.15px;transform:scaleX(1.0114);transform-origin:0 50%;">40</div>
<div class="t" style="left:237.2px;top:702.0px;width:21.8px;text-align:right;font-size:16px;line-height:21px;color:#333;-webkit-text-stroke:0.15px;transform:scaleX(1.0114);transform-origin:100% 50%;">90</div>
<div class="t" style="left:826.5px;top:702.0px;width:21.8px;text-align:left;font-size:16px;line-height:21px;color:#333;-webkit-text-stroke:0.15px;transform:scaleX(1.0114);transform-origin:0 50%;">45</div>
<div class="t" style="left:228.3px;top:677.0px;width:30.7px;text-align:right;font-size:16px;line-height:21px;color:#333;-webkit-text-stroke:0.15px;transform:scaleX(1.0114);transform-origin:100% 50%;">100</div>
<div class="t" style="left:826.5px;top:677.0px;width:21.8px;text-align:left;font-size:16px;line-height:21px;color:#333;-webkit-text-stroke:0.15px;transform:scaleX(1.0114);transform-origin:0 50%;">50</div>
<div class="t" style="left:279.6px;top:948.5px;width:49.9px;text-align:center;font-size:15px;line-height:20px;color:#383838;-webkit-text-stroke:0.15px;transform:scaleX(1.2000);transform-origin:50% 50%;">0.0001</div>
<div class="t" style="left:379.6px;top:948.5px;width:41.5px;text-align:center;font-size:15px;line-height:20px;color:#383838;-webkit-text-stroke:0.15px;transform:scaleX(1.2000);transform-origin:50% 50%;">0.001</div>
<div class="t" style="left:477.6px;top:948.5px;width:33.2px;text-align:center;font-size:15px;line-height:20px;color:#383838;-webkit-text-stroke:0.15px;transform:scaleX(1.2000);transform-origin:50% 50%;">0.01</div>
<div class="t" style="left:577.8px;top:948.5px;width:24.9px;text-align:center;font-size:15px;line-height:20px;color:#383838;-webkit-text-stroke:0.15px;transform:scaleX(1.2000);transform-origin:50% 50%;">0.1</div>
<div class="t" style="left:680.0px;top:948.5px;width:12.3px;text-align:center;font-size:15px;line-height:20px;color:#383838;-webkit-text-stroke:0.15px;transform:scaleX(1.2000);transform-origin:50% 50%;">1</div>
<div class="t" style="left:771.0px;top:948.5px;width:20.7px;text-align:center;font-size:15px;line-height:20px;color:#383838;-webkit-text-stroke:0.15px;transform:scaleX(1.2000);transform-origin:50% 50%;">10</div>
<div class="t" style="left:492.1px;top:967.5px;width:101.8px;text-align:center;font-size:16px;line-height:21px;color:#383838;-webkit-text-stroke:0.15px;transform:scaleX(1.1453);transform-origin:50% 50%;">Size(microns)</div>
<div class="t" style="left:175.1px;top:800.0px;width:70.7px;text-align:center;font-size:15px;line-height:20px;color:#48a048;transform:rotate(-90deg) scaleX(1.18);">%Passing</div>
<div class="t" style="left:827.9px;top:801.0px;width:73.2px;text-align:center;font-size:15px;line-height:20px;color:#e85858;transform:rotate(-90deg) scaleX(1.2);">%Channel</div>
<div class="a" style="left:260px;top:1003px;width:268px;height:34px;background:linear-gradient(#fdfdfe,#eef0f3)"></div>
<div class="a" style="left:260px;top:1005px;width:33px;height:31px;background:#e8f4fc;border:1.5px solid #7a9cc0"></div>
<svg style="left:262px;top:1007px" width="30" height="26" viewBox="0 0 30 26">
<path d="M9 3 L9 21 L13 17 L17 24 L20 22.5 L16 15.5 L22 15.5 Z" fill="#fff" stroke="#111" stroke-width="1.6" stroke-linejoin="round"/></svg>
<svg style="left:297px;top:1008px" width="25" height="22" viewBox="0 0 25 22">
<path d="M7 7 A8.5 8.5 0 1 1 13 20" fill="none" stroke="#8fa4c4" stroke-width="3.4" stroke-linecap="round"/>
<path d="M1 4.5 L11 5 L5 13 Z" fill="#4a82c4" stroke="#3a6aa8" stroke-width="0.8" stroke-linejoin="round"/>
</svg>
<svg style="left:332px;top:1007px" width="22" height="23" viewBox="0 0 22 23">
<defs><linearGradient id="cf" x1="0" y1="0" x2="0" y2="1"><stop offset="0" stop-color="#5a7aa0"/><stop offset="1" stop-color="#0a0a14"/></linearGradient></defs>
<path d="M1 6 L6 1 H20.5 L15.5 6 Z" fill="#a8bce0"/>
<path d="M15.5 6 L20.5 1 V17 L15.5 22 Z" fill="#b4bcc8"/>
<rect x="1" y="6" width="14.5" height="16" fill="url(#cf)"/>
<text x="8.5" y="18.5" text-anchor="middle" font-family="Liberation Sans" font-weight="bold" font-size="10.5" fill="#fff">3d</text>
</svg>
<svg style="left:364px;top:1008px" width="21" height="23" viewBox="0 0 21 23">
<path d="M1.5 1 V6 Q1.5 9 4.5 9 V21.5 H8.5 V9 Q11 9 11 6 V1 H8.5 V5 H4.5 V1 Z" fill="#6a9ac0" stroke="#1a2a3a" stroke-width="1"/>
<rect x="4.5" y="9" width="4" height="12.5" fill="#d88a6a" stroke="#2a1a1a" stroke-width="1"/>
<path d="M15 9 V21.5" stroke="#1a2230" stroke-width="4" stroke-linecap="round"/>
<path d="M15 1.5 Q18.5 3 18 6.5 L15.5 9 L12.5 6.5 Q12 3 15 1.5 Z" fill="#9ab8c8" stroke="#2a3a4a" stroke-width="0.9"/>
</svg>
<svg style="left:395px;top:1007px" width="25" height="24" viewBox="0 0 25 24">
<defs><linearGradient id="pb" x1="0" y1="0" x2="0" y2="1"><stop offset="0" stop-color="#eeeee6"/><stop offset="1" stop-color="#9a9a98"/></linearGradient></defs>
<rect x="5.5" y="1" width="13.5" height="7.5" fill="#e4f6fa" stroke="#8a9aa0" stroke-width="1"/>
<rect x="1" y="7" width="22.5" height="12.5" rx="3" fill="url(#pb)" stroke="#2a2a2a" stroke-width="1.3"/>
<rect x="2" y="7.5" width="20.5" height="5" rx="2" fill="#3a7898"/>
<rect x="6.5" y="18.5" width="11.5" height="4.5" fill="#f4f4f4" stroke="#7a7a7a" stroke-width="0.9"/>
</svg>
<svg style="left:428px;top:1007px" width="24" height="24" viewBox="0 0 24 24">
<rect x="1" y="1" width="13.5" height="18" fill="#f8f8f8" stroke="#9a9a9a" stroke-width="1.2"/>
<path d="M1 19 H14.5" stroke="#222" stroke-width="1.6"/>
<path d="M8 5 H19 L22.5 8.5 V22.5 H8 Z" fill="#fbfbfb" stroke="#8a8a8a" stroke-width="1"/>
<path d="M22.5 8.5 V22.5 H8" fill="none" stroke="#111" stroke-width="1.8"/>
<path d="M12 10 V17 H17" stroke="#6a7aa8" stroke-width="1.4" fill="none"/>
</svg>
<svg style="left:461px;top:1007px" width="25" height="24" viewBox="0 0 25 24">
<path d="M1 1 H20 L23.5 4.5 V23 H1 Z" fill="#94baba" stroke="#1e2a38" stroke-width="1.5"/>
<rect x="5" y="1.5" width="12.5" height="10" fill="#343a5e"/><rect x="13.5" y="3" width="2.5" height="6.5" fill="#e8eef4"/>
<rect x="5" y="14.5" width="12.5" height="7.5" fill="#fbfbfb" stroke="#1e2a38" stroke-width="1"/>
</svg>
<div class="a" style="left:615px;top:1003px;width:199px;height:40px;background:#fff;border:1.5px solid #a0a0a0"></div>
<svg style="left:621px;top:1009px" width="28" height="26" viewBox="0 0 28 26">
<path d="M1 1 V24 H27" fill="none" stroke="#222" stroke-width="1.6"/>
<rect x="4" y="15" width="3" height="8" fill="#e02020"/><rect x="8" y="12" width="3" height="11" fill="#2020c0"/>
<rect x="12" y="6" width="3" height="17" fill="#208020"/><rect x="16" y="8" width="3" height="15" fill="#40d0d0"/><rect x="21" y="19" width="3" height="4" fill="#222"/></svg>
<div class="a" style="left:660px;top:1014px;width:17px;height:17px;background:#fff;border:1px solid #555"></div>
<svg style="left:661px;top:1015px" width="15" height="15" viewBox="0 0 15 15"><path d="M2.5 7.5 L6 11 L12.5 3.5" fill="none" stroke="#000" stroke-width="2.6"/></svg>
<div class="a" style="left:681px;top:1011px;width:26px;height:23px;background:#f00000;border-bottom:2px solid #701010"></div>
<div class="a" style="left:716px;top:1005px;width:71px;height:34px;background:#1c76d6"></div>
<div class="t" style="left:720.6px;top:1012.5px;width:56.5px;text-align:left;font-size:16px;line-height:21px;color:#d8f4ff;-webkit-text-stroke:0.35px;transform:scaleX(0.9337);transform-origin:0 50%;">%Chan</div>
<div class="a" style="left:787px;top:1005px;width:25px;height:36px;background:#ececec"></div>
<svg style="left:792px;top:1009px" width="14" height="28" viewBox="0 0 14 28"><path d="M2 9 L7 3 L12 9 M2 19 L7 25 L12 19" fill="none" stroke="#555" stroke-width="2"/></svg>
<div class="t" style="left:191.2px;top:1047.5px;width:149.8px;text-align:left;font-size:16px;line-height:21px;color:#333;-webkit-text-stroke:0.35px;transform:scaleX(1.0697);transform-origin:0 50%;">Distribution: Number</div>
<div class="t" style="left:505.2px;top:1047.5px;width:163.2px;text-align:left;font-size:16px;line-height:21px;color:#333;-webkit-text-stroke:0.35px;transform:scaleX(1.0207);transform-origin:0 50%;">Progression: Standard</div>
<div class="t" style="left:773.7px;top:1047.5px;width:75.2px;text-align:left;font-size:16px;line-height:21px;color:#333;-webkit-text-stroke:0.35px;transform:scaleX(0.9698);transform-origin:0 50%;">%Passing</div>
<div class="a" style="left:909px;top:649px;width:217px;height:43px;border:1px solid #dcdcdc"></div>
<div class="a" style="left:909px;top:706px;width:217px;height:64px;border:1px solid #dcdcdc"></div>
<div class="a" style="left:909px;top:783px;width:217px;height:57px;border:1px solid #dcdcdc"></div>
<div class="a" style="left:909px;top:854px;width:217px;height:31px;background:#fff;border:2px solid #c8c8c8"></div>
<div class="t" style="left:982.8px;top:861.1px;width:69.5px;text-align:center;font-size:15px;line-height:20px;color:#262626;-webkit-text-stroke:0.35px;transform:scaleX(1.0700);transform-origin:50% 50%;">Bar-&gt;Line</div>
<div class="a" style="left:911px;top:877px;width:213px;height:6px;background:#fff"></div>
<div class="a" style="left:909px;top:883px;width:217px;height:32px;background:#fff;border:2px solid #c8c8c8"></div>
<div class="t" style="left:970.7px;top:890.6px;width:93.6px;text-align:center;font-size:15px;line-height:20px;color:#262626;-webkit-text-stroke:0.35px;transform:scaleX(1.0700);transform-origin:50% 50%;">Large-&gt;Small</div>
<div class="a" style="left:911px;top:907px;width:213px;height:6px;background:#fff"></div>
<div class="a" style="left:909px;top:913px;width:217px;height:32px;background:#fff;border:2px solid #c8c8c8"></div>
<div class="t" style="left:966.3px;top:921.1px;width:102.4px;text-align:center;font-size:15px;line-height:20px;color:#262626;-webkit-text-stroke:0.35px;transform:scaleX(1.0700);transform-origin:50% 50%;">Restore Graph</div>
<div class="a" style="left:911px;top:937px;width:213px;height:6px;background:#fff"></div>
<div class="a" style="left:909px;top:943px;width:217px;height:33px;background:#fff;border:2px solid #c8c8c8"></div>
<div class="t" style="left:998.0px;top:950.8px;width:39.0px;text-align:center;font-size:15px;line-height:20px;color:#262626;-webkit-text-stroke:0.35px;transform:scaleX(1.0700);transform-origin:50% 50%;">Keep</div>
<div class="a" style="left:911px;top:967px;width:213px;height:7px;background:#fff"></div>
<div class="a" style="left:909px;top:974px;width:217px;height:31px;background:#fff;border:2px solid #c8c8c8"></div>
<div class="t" style="left:985.5px;top:981.0px;width:64.0px;text-align:center;font-size:15px;line-height:20px;color:#262626;-webkit-text-stroke:0.35px;transform:scaleX(1.0700);transform-origin:50% 50%;">Retained</div>
<div class="a" style="left:911px;top:997px;width:213px;height:6px;background:#fff"></div>
<svg style="left:909px;top:1014px" width="217" height="53" viewBox="0 0 217 53">
<rect x="0.5" y="0.5" width="216" height="52" fill="#fff" stroke="#c0c0c0"/>
<path d="M1 1 H216" stroke="#606060" stroke-width="2"/><path d="M1 1 V52" stroke="#606060" stroke-width="2"/>
<g fill="#7a9ac8">
<rect x="5.0" y="7.0" width="2.2" height="2.2" opacity="1.00"/><rect x="5.0" y="11.5" width="2.2" height="2.2" opacity="0.92"/><rect x="5.0" y="16.0" width="2.2" height="2.2" opacity="0.84"/><rect x="5.0" y="20.5" width="2.2" height="2.2" opacity="0.76"/><rect x="5.0" y="25.0" width="2.2" height="2.2" opacity="0.68"/><rect x="5.0" y="29.5" width="2.2" height="2.2" opacity="0.60"/><rect x="9.5" y="7.0" width="2.2" height="2.2" opacity="0.84"/><rect x="9.5" y="11.5" width="2.2" height="2.2" opacity="0.76"/><rect x="9.5" y="16.0" width="2.2" height="2.2" opacity="0.68"/><rect x="9.5" y="20.5" width="2.2" height="2.2" opacity="0.60"/><rect x="9.5" y="25.0" width="2.2" height="2.2" opacity="0.52"/><rect x="9.5" y="29.5" width="2.2" height="2.2" opacity="0.44"/><rect x="14.0" y="7.0" width="2.2" height="2.2" opacity="0.68"/><rect x="14.0" y="11.5" width="2.2" height="2.2" opacity="0.60"/><rect x="14.0" y="16.0" width="2.2" height="2.2" opacity="0.52"/><rect x="14.0" y="20.5" width="2.2" height="2.2" opacity="0.44"/><rect x="14.0" y="25.0" width="2.2" height="2.2" opacity="0.36"/><rect x="14.0" y="29.5" width="2.2" height="2.2" opacity="0.28"/><rect x="18.5" y="7.0" width="2.2" height="2.2" opacity="0.52"/><rect x="18.5" y="11.5" width="2.2" height="2.2" opacity="0.44"/><rect x="18.5" y="16.0" width="2.2" height="2.2" opacity="0.36"/><rect x="18.5" y="20.5" width="2.2" height="2.2" opacity="0.28"/><rect x="18.5" y="25.0" width="2.2" height="2.2" opacity="0.20"/><rect x="23.0" y="7.0" width="2.2" height="2.2" opacity="0.36"/><rect x="23.0" y="11.5" width="2.2" height="2.2" opacity="0.28"/><rect x="23.0" y="16.0" width="2.2" height="2.2" opacity="0.20"/><rect x="23.0" y="20.5" width="2.2" height="2.2" opacity="0.15"/><rect x="27.5" y="7.0" width="2.2" height="2.2" opacity="0.20"/><rect x="27.5" y="11.5" width="2.2" height="2.2" opacity="0.15"/><rect x="27.5" y="16.0" width="2.2" height="2.2" opacity="0.15"/>
</g>
<g transform="skewX(-8)"><text x="21" y="34" font-family="Liberation Sans" font-style="italic" font-weight="bold" font-size="37" fill="#1d56a0" textLength="188" lengthAdjust="spacingAndGlyphs">Microtrac</text></g>
<path d="M15 34 L31 10" stroke="#1d56a0" stroke-width="4.5" stroke-linecap="round"/>
<text x="5" y="46" font-family="Liberation Sans" font-style="italic" font-weight="bold" font-size="8" fill="#2a4a7e" stroke="#2a4a7e" stroke-width="0.3" textLength="202" lengthAdjust="spacingAndGlyphs">Total Solutions in Particle Characterization</text>
</svg>
<div class="a" style="left:1164px;top:355px;width:343px;height:22px;background:#e4e4e6"></div>
<div class="t" style="left:1316.0px;top:356.5px;width:36.1px;text-align:center;font-size:15.75px;line-height:20px;color:#1e1e1e;font-weight:bold;">Title</div>
<div class="a" style="left:1164px;top:377px;width:343px;height:24px;background:#fcfadc"></div>
<div class="t" style="left:1223.8px;top:381.0px;width:221.0px;text-align:center;font-size:15.75px;line-height:20px;color:#8e3292;font-weight:bold;transform:scaleX(1.0113);transform-origin:50% 50%;">Nano Glutathione Lot# 20364</div>
<div class="a" style="left:1164px;top:401px;width:343px;height:22px;background:#e4e4e6"></div>
<div class="t" style="left:1294.4px;top:403.5px;width:79.3px;text-align:center;font-size:15.75px;line-height:20px;color:#1e1e1e;font-weight:bold;">Identifiers</div>
<div class="a" style="left:1164px;top:423px;width:343px;height:46px;background:#fcfadc"></div>
<div class="t" style="left:1280.8px;top:427.0px;width:106.4px;text-align:center;font-size:15.75px;line-height:20px;color:#8e3292;font-weight:bold;">L-Glutathione</div>
<div class="t" style="left:1295.7px;top:450.0px;width:76.7px;text-align:center;font-size:15.75px;line-height:20px;color:#8e3292;font-weight:bold;">66mg/2ml</div>
<div class="a" style="left:1373px;top:469px;width:134px;height:21px;background:#fcfadc"></div>
<div class="t" style="left:1231.3px;top:472.3px;width:132.7px;text-align:right;font-size:15.75px;line-height:20px;color:#2a2a84;font-weight:bold;">Database Record</div>
<div class="t" style="left:1265.5px;top:495.4px;width:98.5px;text-align:right;font-size:15.75px;line-height:20px;color:#2a2a84;font-weight:bold;">Run Number</div>
<div class="t" style="left:1416.4px;top:495.4px;width:45.1px;text-align:center;font-size:15.75px;line-height:20px;color:#8e3292;font-weight:bold;">1 of 1</div>
<div class="t" style="left:1325.9px;top:518.4px;width:38.1px;text-align:right;font-size:15.75px;line-height:20px;color:#2a2a84;font-weight:bold;">Date</div>
<div class="t" style="left:1406.3px;top:518.4px;width:65.3px;text-align:center;font-size:15.75px;line-height:20px;color:#8e3292;font-weight:bold;">7/1/2020</div>
<div class="t" style="left:1323.5px;top:541.4px;width:40.5px;text-align:right;font-size:15.75px;line-height:20px;color:#2a2a84;font-weight:bold;">Time</div>
<div class="t" style="left:1403.1px;top:541.4px;width:71.7px;text-align:center;font-size:15.75px;line-height:20px;color:#8e3292;font-weight:bold;">11:13 AM</div>
<div class="t" style="left:1253.2px;top:564.4px;width:110.8px;text-align:right;font-size:15.75px;line-height:20px;color:#2a2a84;font-weight:bold;">Acquired Date</div>
<div class="t" style="left:1406.3px;top:564.4px;width:65.3px;text-align:center;font-size:15.75px;line-height:20px;color:#8e3292;font-weight:bold;">7/1/2020</div>
<div class="t" style="left:1250.9px;top:587.4px;width:113.1px;text-align:right;font-size:15.75px;line-height:20px;color:#2a2a84;font-weight:bold;">Acquired Time</div>
<div class="t" style="left:1403.1px;top:587.4px;width:71.7px;text-align:center;font-size:15.75px;line-height:20px;color:#8e3292;font-weight:bold;">11:09 AM</div>
<div class="t" style="left:1253.2px;top:610.4px;width:110.8px;text-align:right;font-size:15.75px;line-height:20px;color:#2a2a84;font-weight:bold;">Serial Number</div>
<div class="t" style="left:1412.0px;top:610.4px;width:53.9px;text-align:center;font-size:15.75px;line-height:20px;color:#8e3292;font-weight:bold;">W3927</div>
<div class="a" style="left:1164px;top:654px;width:343px;height:21px;background:#e4e4e6"></div>
<div class="t" style="left:1272.9px;top:655.5px;width:122.2px;text-align:center;font-size:15.75px;line-height:20px;color:#1e1e1e;font-weight:bold;">Calculated Data</div>
<div class="t" style="left:1241.8px;top:679.0px;width:122.2px;text-align:right;font-size:15.75px;line-height:20px;color:#2a2a84;font-weight:bold;white-space:pre;">Above Residual</div>
<div class="t" style="left:1433.6px;top:679.0px;width:12.8px;text-align:center;font-size:15.75px;line-height:20px;color:#8e3292;font-weight:bold;">0</div>
<div class="t" style="left:1243.6px;top:701.9px;width:120.4px;text-align:right;font-size:15.75px;line-height:20px;color:#2a2a84;font-weight:bold;white-space:pre;">Below Residual</div>
<div class="t" style="left:1433.6px;top:701.9px;width:12.8px;text-align:center;font-size:15.75px;line-height:20px;color:#8e3292;font-weight:bold;">0</div>
<div class="t" style="left:1253.2px;top:724.7px;width:110.8px;text-align:right;font-size:15.75px;line-height:20px;color:#2a2a84;font-weight:bold;white-space:pre;">Loading Index</div>
<div class="t" style="left:1414.8px;top:724.7px;width:50.4px;text-align:center;font-size:15.75px;line-height:20px;color:#8e3292;font-weight:bold;">1.2E-1</div>
<div class="t" style="left:1216.5px;top:747.5px;width:147.5px;text-align:right;font-size:15.75px;line-height:20px;color:#2a2a84;font-weight:bold;white-space:pre;">Conc. Index : cc/ml</div>
<div class="t" style="left:1379.3px;top:747.5px;width:121.3px;text-align:center;font-size:15.75px;line-height:20px;color:#8e3292;font-weight:bold;">0.2495 : 3.93E-6</div>
<div class="t" style="left:1255.0px;top:770.4px;width:109.0px;text-align:right;font-size:15.75px;line-height:20px;color:#2a2a84;font-weight:bold;white-space:pre;">RMS Residual</div>
<div class="t" style="left:1411.3px;top:770.4px;width:57.4px;text-align:center;font-size:15.75px;line-height:20px;color:#8e3292;font-weight:bold;">0.122%</div>
<div class="t" style="left:1259.7px;top:793.2px;width:104.3px;text-align:right;font-size:15.75px;line-height:20px;color:#2a2a84;font-weight:bold;white-space:pre;">Cell Temp (C)</div>
<div class="t" style="left:1418.3px;top:793.2px;width:43.4px;text-align:center;font-size:15.75px;line-height:20px;color:#8e3292;font-weight:bold;">23.81</div>
<div class="t" style="left:1262.3px;top:816.1px;width:101.7px;text-align:right;font-size:15.75px;line-height:20px;color:#2a2a84;font-weight:bold;white-space:pre;">Viscosity(cp)</div>
<div class="t" style="left:1413.9px;top:816.1px;width:52.2px;text-align:center;font-size:15.75px;line-height:20px;color:#8e3292;font-weight:bold;">0.9150</div>
<div class="t" style="left:1212.1px;top:839.0px;width:151.9px;text-align:right;font-size:15.75px;line-height:20px;color:#2a2a84;font-weight:bold;white-space:pre;">Reflected Pwr  (uW)</div>
<div class="t" style="left:1427.1px;top:839.0px;width:25.9px;text-align:center;font-size:15.75px;line-height:20px;color:#8e3292;font-weight:bold;">.90</div>
<div class="a" style="left:1164px;top:860px;width:343px;height:21px;background:#e4e4e6"></div>
<div class="t" style="left:1234.4px;top:861.5px;width:199.2px;text-align:center;font-size:15.75px;line-height:20px;color:#1e1e1e;font-weight:bold;">User Defined Calculations</div>
<div class="a" style="left:1164px;top:881px;width:343px;height:22px;background:#fcfadc"></div>
<div class="t" style="left:1244.0px;top:884.5px;width:46.9px;text-align:center;font-size:15.75px;line-height:20px;color:#1e1e1e;font-weight:bold;">Name</div>
<div class="t" style="left:1417.4px;top:884.5px;width:45.2px;text-align:center;font-size:15.75px;line-height:20px;color:#1e1e1e;font-weight:bold;">Value</div>
<div class="a" style="left:1164px;top:974px;width:343px;height:23px;background:#e4e4e6"></div>
<div class="t" style="left:1254.5px;top:976.5px;width:158.9px;text-align:center;font-size:15.75px;line-height:20px;color:#1e1e1e;font-weight:bold;">Recalculation Status</div>
<div class="t" style="left:1196.8px;top:1000.4px;width:274.5px;text-align:center;font-size:15.75px;line-height:20px;color:#8e3292;font-weight:bold;transform:scaleX(0.9761);transform-origin:50% 50%;">Live-Meas : : Original : Recalculated</div>
</body></html>
